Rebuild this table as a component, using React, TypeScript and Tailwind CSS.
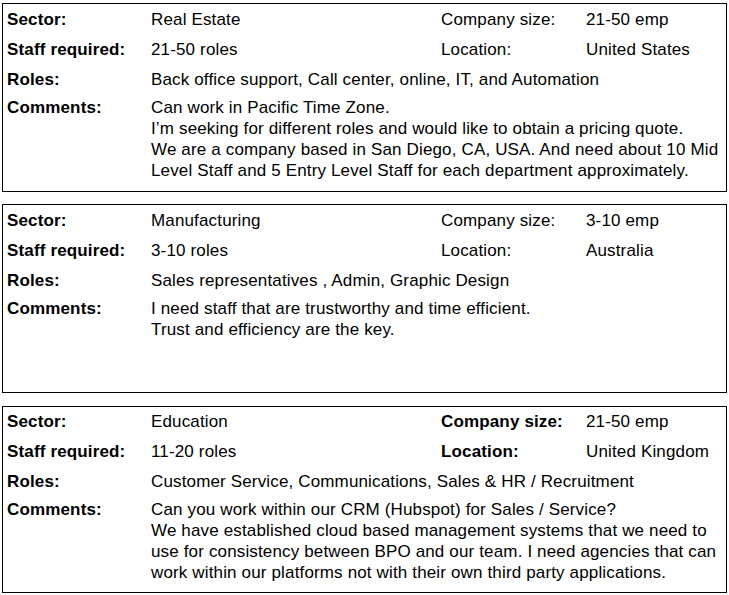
type Lead = {
  sector: string
  staff: string
  size: string
  location: string
  roles: string
  comments: string[]
  boldRight?: boolean
  box: string
}

const leads: Lead[] = [
  {
    sector: "Real Estate",
    staff: "21-50 roles",
    size: "21-50 emp",
    location: "United States",
    roles: "Back office support, Call center, online, IT, and Automation",
    comments: [
      "Can work in Pacific Time Zone.",
      "I’m seeking for different roles and would like to obtain a pricing quote.",
      "We are a company based in San Diego, CA, USA. And need about 10 Mid Level Staff and 5 Entry Level Staff for each department approximately.",
    ],
    box: "h-[189px] pt-[4px]",
  },
  {
    sector: "Manufacturing",
    staff: "3-10 roles",
    size: "3-10 emp",
    location: "Australia",
    roles: "Sales representatives , Admin, Graphic Design",
    comments: [
      "I need staff that are trustworthy and time efficient.",
      "Trust and efficiency are the key.",
    ],
    box: "h-[189px] pt-[4px]",
  },
  {
    sector: "Education",
    staff: "11-20 roles",
    size: "21-50 emp",
    location: "United Kingdom",
    roles: "Customer Service, Communications, Sales & HR / Recruitment",
    comments: [
      "Can you work within our CRM (Hubspot) for Sales / Service?",
      "We have established cloud based management systems that we need to use for consistency between BPO and our team. I need agencies that can work within our platforms not with their own third party applications.",
    ],
    boldRight: true,
    box: "h-[187px] pt-[3px]",
  },
]

function LeadCard({ lead }: { lead: Lead }) {
  const right = lead.boldRight ? "font-bold" : ""
  return (
    <div className={`border border-black pl-[4px] pr-[2px] ${lead.box}`}>
      <div className="grid grid-cols-[144px_290px_145px_1fr] leading-[21px]">
        {/* row 1 */}
        <div className="h-[30px] pt-[1px] font-bold">Sector:</div>
        <div className="h-[30px] pt-[1px]">{lead.sector}</div>
        <div className={`h-[30px] pt-[1px] ${right}`}>Company size:</div>
        <div className="h-[30px] pt-[1px]">{lead.size}</div>

        {/* row 2 */}
        <div className="h-[30px] pt-[1px] font-bold">Staff required:</div>
        <div className="h-[30px] pt-[1px]">{lead.staff}</div>
        <div className={`h-[30px] pt-[1px] ${right}`}>Location:</div>
        <div className="h-[30px] pt-[1px]">{lead.location}</div>

        {/* row 3 */}
        <div className="h-[28px] pt-[1px] font-bold">Roles:</div>
        <div className="col-span-3 h-[28px] pt-[1px]">{lead.roles}</div>

        {/* comments */}
        <div className="pt-[1px] font-bold">Comments:</div>
        <div className="col-span-3 pt-[1px]">
          {lead.comments.map((c, i) => (
            <div key={i}>{c}</div>
          ))}
        </div>
      </div>
    </div>
  )
}

export default function App() {
  return (
    <div className="min-h-[595px] w-[729px] bg-white pl-[2px] pr-[2px] pt-[3px] text-[17px] tracking-[0.15px] text-black [font-family:'Liberation_Sans',Arial,sans-serif]">
      <LeadCard lead={leads[0]} />
      <div className="mt-[12px]">
        <LeadCard lead={leads[1]} />
      </div>
      <div className="mt-[13px]">
        <LeadCard lead={leads[2]} />
      </div>
    </div>
  )
}
